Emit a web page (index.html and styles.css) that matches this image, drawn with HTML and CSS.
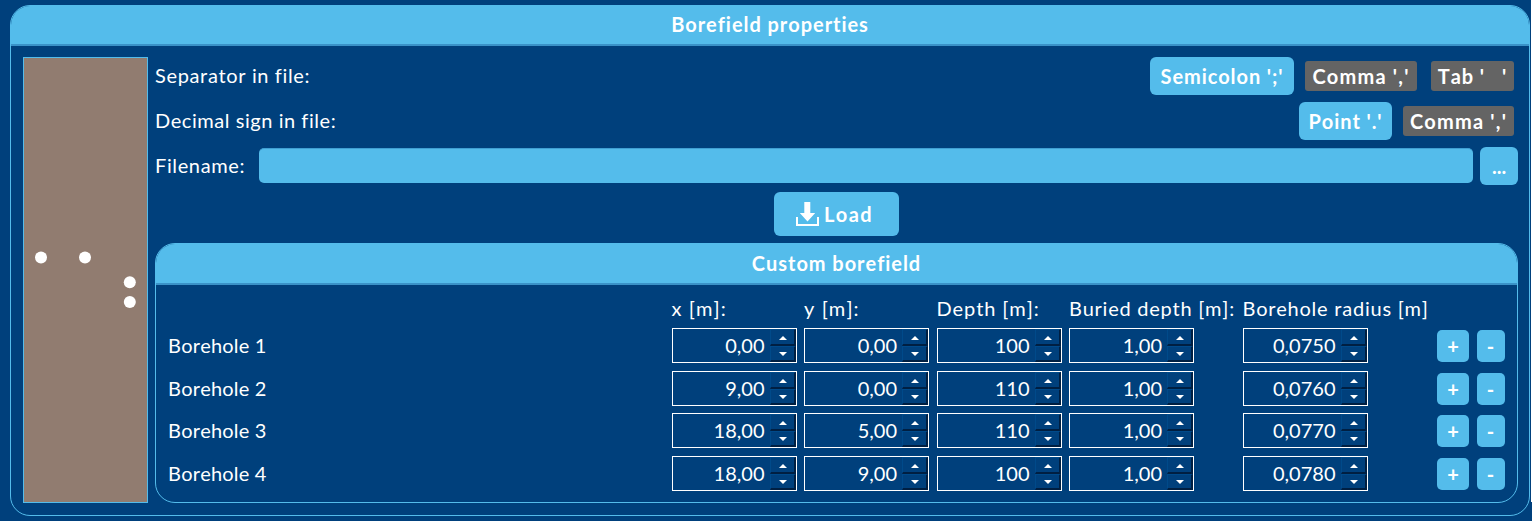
FILE: index.html
```html
<!DOCTYPE html>
<html lang="en">
<head>
<meta charset="utf-8">
<title>Borefield properties</title>
<link rel="stylesheet" href="styles.css">
</head>
<body>
<main class="panel">
  <h1 class="title">Borefield properties</h1>
  <div class="content">
    <svg class="sketch" width="125" height="446" viewBox="0 0 125 446">
      <rect x=".5" y=".5" width="124" height="445" fill="#917c70" stroke="#54bceb"/>
      <g fill="#fff"><circle cx="18" cy="200.500" r="6"/><circle cx="62" cy="200.500" r="6"/><circle cx="106.800" cy="225.300" r="6"/><circle cx="106.800" cy="245" r="6"/></g>
    </svg>
    <section class="form">
      <div class="row">
        <span class="label">Separator in file:</span>
        <div class="options">
          <button class="option active semi">Semicolon ';'</button>
          <button class="option comma">Comma ','</button>
          <button class="option tab">Tab '&nbsp;&nbsp; '</button>
        </div>
      </div>
      <div class="row">
        <span class="label decimal">Decimal sign in file:</span>
        <div class="options">
          <button class="option active point">Point '.'</button>
          <button class="option comma last">Comma ','</button>
        </div>
      </div>
      <div class="row file">
        <label class="label file-label" for="filename">Filename:</label>
        <input id="filename" class="filename">
        <button class="browse">...</button>
      </div>
      <button class="load">
        <svg width="23" height="25" viewBox="0 0 23 25"><path d="M8.300 0h6v11h4.900L11.500 19.600 3.800 11h4.500z" fill="#fff"/><path d="M1 15v8h21v-8" fill="none" stroke="#fff" stroke-width="2"/></svg>
        <span>Load</span>
      </button>
      <div class="custom">
        <h2 class="title">Custom borefield</h2>
        <div class="table" id="table">
          <span></span><span class="head short">x [m]:</span><span class="head short">y [m]:</span><span class="head depth">Depth [m]:</span><span class="head">Buried depth [m]:</span><span class="head">Borehole radius [m]</span><span></span><span></span>
        </div>
      </div>
    </section>
  </div>
</main>
<div class="edge"></div>
<script src="table.js"></script>
</body>
</html>
```
FILE: styles.css
```css
* { box-sizing: border-box; }
body {
  margin: 0;
  height: 521px;
  overflow: hidden;
  display: flex;
  align-items: flex-start;
  background: #00407c;
  color: #fff;
  font: 20px/24px Lato, "Liberation Sans", sans-serif;
  font-kerning: none;
  font-variant-ligatures: none;
  white-space: nowrap;
}
button, input { font: inherit; font-kerning: none; color: inherit; border: 0; padding: 0; margin: 0; }
button { font-weight: 700; background: #54bceb; border-radius: 6px; display: flex; align-items: center; justify-content: center; }
.panel { width: 1520px; height: 511px; margin: 5px 1px 0 10px; border: 1px solid #54bceb; border-radius: 20px; overflow: hidden; flex: none; }
.edge { width: 1px; height: 502px; background: #fff; }
.title { margin: 0; height: 40px; font-size: 20px; line-height: 37px; font-weight: 700; letter-spacing: .95px; text-align: center; background: #54bceb; border-bottom: 2px solid #3a92c8; }
.content { display: flex; gap: 7px; padding: 11px 11px 0 12px; }
.sketch { flex: none; }
.form { flex: 1; display: flex; flex-direction: column; }
.row { height: 38px; margin-bottom: 7px; display: flex; align-items: center; justify-content: space-between; }
.label { letter-spacing: .62px; padding-bottom: 2px; }
.decimal { letter-spacing: .55px; }
.options { display: flex; align-items: center; padding-right: 4px; }
.option { height: 30px; background: #646464; border-radius: 3px; letter-spacing: .9px; padding-bottom: 1px; }
.option.active { height: 38px; background: #54bceb; border-radius: 6px; margin-right: 11px; }
.semi { width: 144px; }
.comma { width: 112px; margin-right: 14px; letter-spacing: 1.200px; }
.comma.last { width: 111px; margin-right: 0; }
.tab { width: 83px; }
.point { width: 93px; }
.file-label { width: 104px; }
.filename { flex: 1; height: 35px; margin-bottom: 1px; border-radius: 5px; background: #54bceb; border-top: 1px solid #3f9fd3; }
.browse { width: 38px; height: 38px; margin-left: 7px; }
.load { width: 125px; height: 44px; align-self: center; gap: 5px; flex: none; letter-spacing: 1.400px; padding-right: 4px; }
.load span { padding-bottom: 1px; }
.custom { height: 260px; margin-top: 7px; border: 1px solid #54bceb; border-radius: 20px; overflow: hidden; }
.custom .title { height: 41px; line-height: 39px; }
.table {
  display: grid;
  grid-template-columns: 496px 125px 125px 125px 166px 187px 32px 28px;
  grid-template-rows: 36px 43px 42px 43px 35px;
  column-gap: 7.500px;
  padding: 7px 0 0 12px;
}
.head { padding-top: 4px; letter-spacing: .75px; }
.head.short { letter-spacing: 1.100px; }
.head.depth { letter-spacing: .9px; }
.name { padding-top: 5px; letter-spacing: .2px; }
.spin { width: 125px; height: 35px; border: 1px solid #fff; display: flex; }
.value { flex: 1; text-align: right; padding: 4px 5px 0 0; }
.arrows { width: 26px; flex: none; display: flex; flex-direction: column; }
.arrow { flex: 1; display: flex; align-items: center; justify-content: center; border: 1px solid #004a8a; border-right: 2px solid #001f42; border-bottom: 2px solid #001f42; }
.arrow svg { margin: 2px 0 0 1px; }
.add, .remove { height: 32px; margin-top: 2px; border-radius: 5px; }
.add { width: 32px; }
.remove { width: 28px; }
```
FILE: table.js
```js
const rows = [
  ["0,00", "0,00", "100", "1,00", "0,0750"],
  ["9,00", "0,00", "110", "1,00", "0,0760"],
  ["18,00", "5,00", "110", "1,00", "0,0770"],
  ["18,00", "9,00", "100", "1,00", "0,0780"],
];
const arrow = (points) =>
  `<span class="arrow"><svg width="8" height="4" viewBox="0 0 8 4"><polygon points="${points}" fill="#fff"/></svg></span>`;
const spin = (value) =>
  `<div class="spin"><span class="value">${value}</span><span class="arrows">${arrow("0,4 4,0 8,4")}${arrow("0,0 8,0 4,4")}</span></div>`;
document.getElementById("table").insertAdjacentHTML("beforeend", rows.map((values, i) =>
  `<span class="name">Borehole ${i + 1}</span>${values.map(spin).join("")}<button class="add">+</button><button class="remove">-</button>`
).join(""));
```
